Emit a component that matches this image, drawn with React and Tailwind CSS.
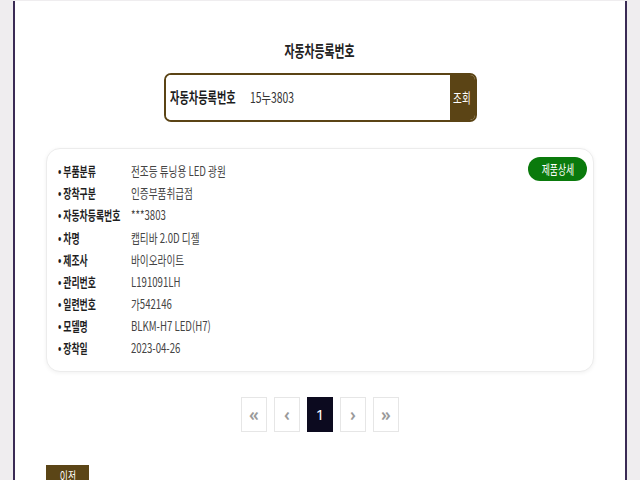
import React from "react";

const FONT = { fontFamily: '"Noto Sans CJK KR", "Noto Sans", sans-serif' };

const rows = [
  ["부품분류", "전조등 튜닝용 LED 광원"],
  ["장착구분", "인증부품취급점"],
  ["자동차등록번호", "***3803"],
  ["차명", "캡티바 2.0D 디젤"],
  ["제조사", "바이오라이트"],
  ["관리번호", "L191091LH"],
  ["일련번호", "가542146"],
  ["모델명", "BLKM-H7 LED(H7)"],
  ["장착일", "2023-04-26"],
];

// narrow glyphs, like the condensed face in the reference
function Narrow({ children, className = "" }) {
  return (
    <span className={`inline-block whitespace-nowrap scale-x-[0.68] ${className}`}>
      {children}
    </span>
  );
}

function PageBox({ children, active }) {
  return (
    <div
      className={`w-[26px] h-[35px] flex items-center justify-center font-['Noto_Sans',sans-serif] ${
        active
          ? "bg-[#0c0a1f] text-white text-[15px]"
          : "bg-white border border-[#e6e6e6] text-[#9a9a9a] text-[17px] font-semibold"
      }`}
    >
      {children}
    </div>
  );
}

export default function App() {
  return (
    <div className="w-[640px] h-[480px] overflow-hidden bg-[#efedef] px-[13px] pt-px" style={FONT}>
      <div className="h-[479px] bg-white border-x-2 border-[#3a2b55] px-[31px] overflow-hidden">
        {/* title */}
        <div className="pt-[39px] text-center text-[16px] leading-[20px] font-bold text-[#222]">
          <Narrow className="origin-center">자동차등록번호</Narrow>
        </div>

        {/* search */}
        <div className="mt-[13px] mx-auto w-[313px] h-[49px] flex border-2 border-[#5b4415] rounded-[7px] overflow-hidden">
          <div className="flex-1 flex items-center pl-[4px] bg-white">
            <div className="w-[80px] text-[15px] font-bold text-[#1c1c1c]">
              <Narrow className="origin-left">자동차등록번호</Narrow>
            </div>
            <div className="text-[14px] text-[#333]">
              <Narrow className="origin-left scale-x-[0.74]">15누3803</Narrow>
            </div>
          </div>
          <div className="w-[25px] bg-[#5b4415] flex items-center justify-center text-[14px] text-white">
            <Narrow className="origin-center">조회</Narrow>
          </div>
        </div>

        {/* card */}
        <div className="mt-[26px] h-[224px] bg-white border border-[#ececec] rounded-[14px] shadow-[0_1px_4px_rgba(0,0,0,0.06)] flex justify-between pl-[11px] pr-[6px] pt-[11px]">
          <div className="flex flex-col">
            {rows.map(([k, v]) => (
              <div key={k} className="h-[22.1px] flex items-center text-[13px]">
                <div className="w-[73px] font-bold text-[#1e1e1e]">
                  <Narrow className="origin-left">• {k}</Narrow>
                </div>
                <div className="text-[#444]">
                  <Narrow className="origin-left scale-x-[0.74]">{v}</Narrow>
                </div>
              </div>
            ))}
          </div>
          <div>
            <div className="-mt-[3px] w-[59px] h-[24px] rounded-full bg-[#0a7a0c] text-white text-[13px] flex items-center justify-center">
              <Narrow className="origin-center">제품상세</Narrow>
            </div>
          </div>
        </div>

        {/* pagination */}
        <div className="mt-[25px] flex justify-center gap-[7px]">
          <PageBox>«</PageBox>
          <PageBox>‹</PageBox>
          <PageBox active>1</PageBox>
          <PageBox>›</PageBox>
          <PageBox>»</PageBox>
        </div>

        {/* prev */}
        <div className="mt-[33px] w-[43px] h-[24px] bg-[#5b4516] text-white text-[13px] flex items-start justify-center pt-[1px]">
          <Narrow className="origin-center">이전</Narrow>
        </div>
      </div>
    </div>
  );
}
